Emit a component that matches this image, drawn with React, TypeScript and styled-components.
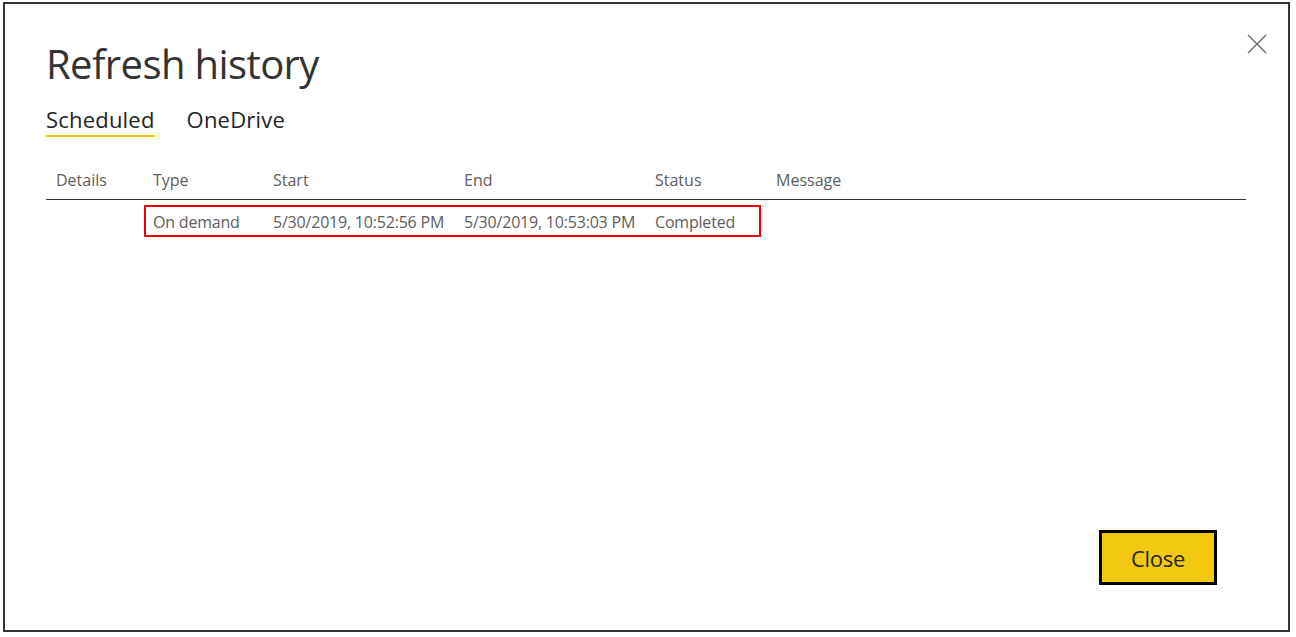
import styled, { createGlobalStyle } from "styled-components";

const GlobalStyle = createGlobalStyle`
  html, body {
    margin: 0;
    background: #ffffff;
  }
  body {
    font-family: "Open Sans", "Noto Sans", "Liberation Sans", sans-serif;
  }
`;

const Frame = styled.div`
  box-sizing: border-box;
  width: 1287px;
  height: 630px;
  margin: 2px 0 0 3px;
  border: 2px solid #333333;
  background: #ffffff;
  position: relative;
  display: flex;
  flex-direction: column;
  padding: 0 42px 0 41px;
`;

const CloseIcon = styled.button`
  position: absolute;
  top: 29px;
  right: 20px;
  width: 22px;
  height: 22px;
  padding: 0;
  border: none;
  background: transparent;
  cursor: pointer;
  display: flex;
  align-items: center;
  justify-content: center;
`;

const Title = styled.h1`
  margin: 32px 0 0 0;
  font-size: 40px;
  font-weight: 400;
  line-height: 56px;
  color: #333333;
  letter-spacing: -0.6px;
`;

const Tabs = styled.div`
  display: flex;
  gap: 32px;
  margin-top: 12px;
`;

type TabProps = {
  $active?: boolean;
};

const Tab = styled.div<TabProps>`
  font-size: 22px;
  line-height: 30px;
  color: #252423;
  letter-spacing: 0.2px;
  padding-bottom: 1px;
  border-bottom: 2px solid ${({ $active }) => ($active ? "#F2C811" : "transparent")};
`;

const Table = styled.div`
  margin-top: 25px;
  display: flex;
  flex-direction: column;
`;

const columns = "97px 120px 191px 191px 121px 1fr";

const HeaderRow = styled.div`
  display: grid;
  grid-template-columns: ${columns};
  height: 37px;
  align-items: center;
  border-bottom: 1px solid #333333;
`;

const HeaderCell = styled.div`
  padding-left: 10px;
  font-size: 16px;
  line-height: 20px;
  padding-bottom: 2px;
  color: #605e5c;
`;

const Row = styled.div`
  display: grid;
  grid-template-columns: ${columns};
  margin-top: 5px;
  height: 32px;
`;

const Highlight = styled.div`
  grid-column: 2 / 6;
  display: grid;
  grid-template-columns: 120px 191px 191px 1fr;
  align-items: center;
  margin-right: 5px;
  border: 2px solid #e8000b;
  margin-left: 1px;
`;

const Cell = styled.div`
  padding-left: 7px;
  padding-top: 2px;
  font-size: 16px;
  color: #605e5c;
  letter-spacing: -0.2px;
  white-space: nowrap;
`;

const Spacer = styled.div`
  flex: 1;
`;

const Footer = styled.div`
  display: flex;
  justify-content: flex-end;
  padding: 0 29px 45px 0;
`;

const CloseButton = styled.button`
  box-sizing: border-box;
  width: 118px;
  height: 55px;
  background: #f2c811;
  border: 3px solid #000000;
  font-family: inherit;
  font-size: 22px;
  color: #252423;
  cursor: pointer;
  letter-spacing: -0.3px;
`;

const headers = ["Details", "Type", "Start", "End", "Status", "Message"];

const entry = {
  type: "On demand",
  start: "5/30/2019, 10:52:56 PM",
  end: "5/30/2019, 10:53:03 PM",
  status: "Completed",
};

function App(): JSX.Element {
  return (
    <>
      <GlobalStyle />
      <Frame>
        <CloseIcon aria-label="Close dialog">
          <svg width="20" height="20" viewBox="0 0 20 20">
            <path d="M1 1 L19 19 M19 1 L1 19" stroke="#6b6b6b" strokeWidth="1.4" fill="none" />
          </svg>
        </CloseIcon>
        <Title>Refresh history</Title>
        <Tabs>
          <Tab $active>Scheduled</Tab>
          <Tab>OneDrive</Tab>
        </Tabs>
        <Table>
          <HeaderRow>
            {headers.map((h) => (
              <HeaderCell key={h}>{h}</HeaderCell>
            ))}
          </HeaderRow>
          <Row>
            <div />
            <Highlight>
              <Cell>{entry.type}</Cell>
              <Cell>{entry.start}</Cell>
              <Cell>{entry.end}</Cell>
              <Cell>{entry.status}</Cell>
            </Highlight>
          </Row>
        </Table>
        <Spacer />
        <Footer>
          <CloseButton>Close</CloseButton>
        </Footer>
      </Frame>
    </>
  );
}

export default App;
